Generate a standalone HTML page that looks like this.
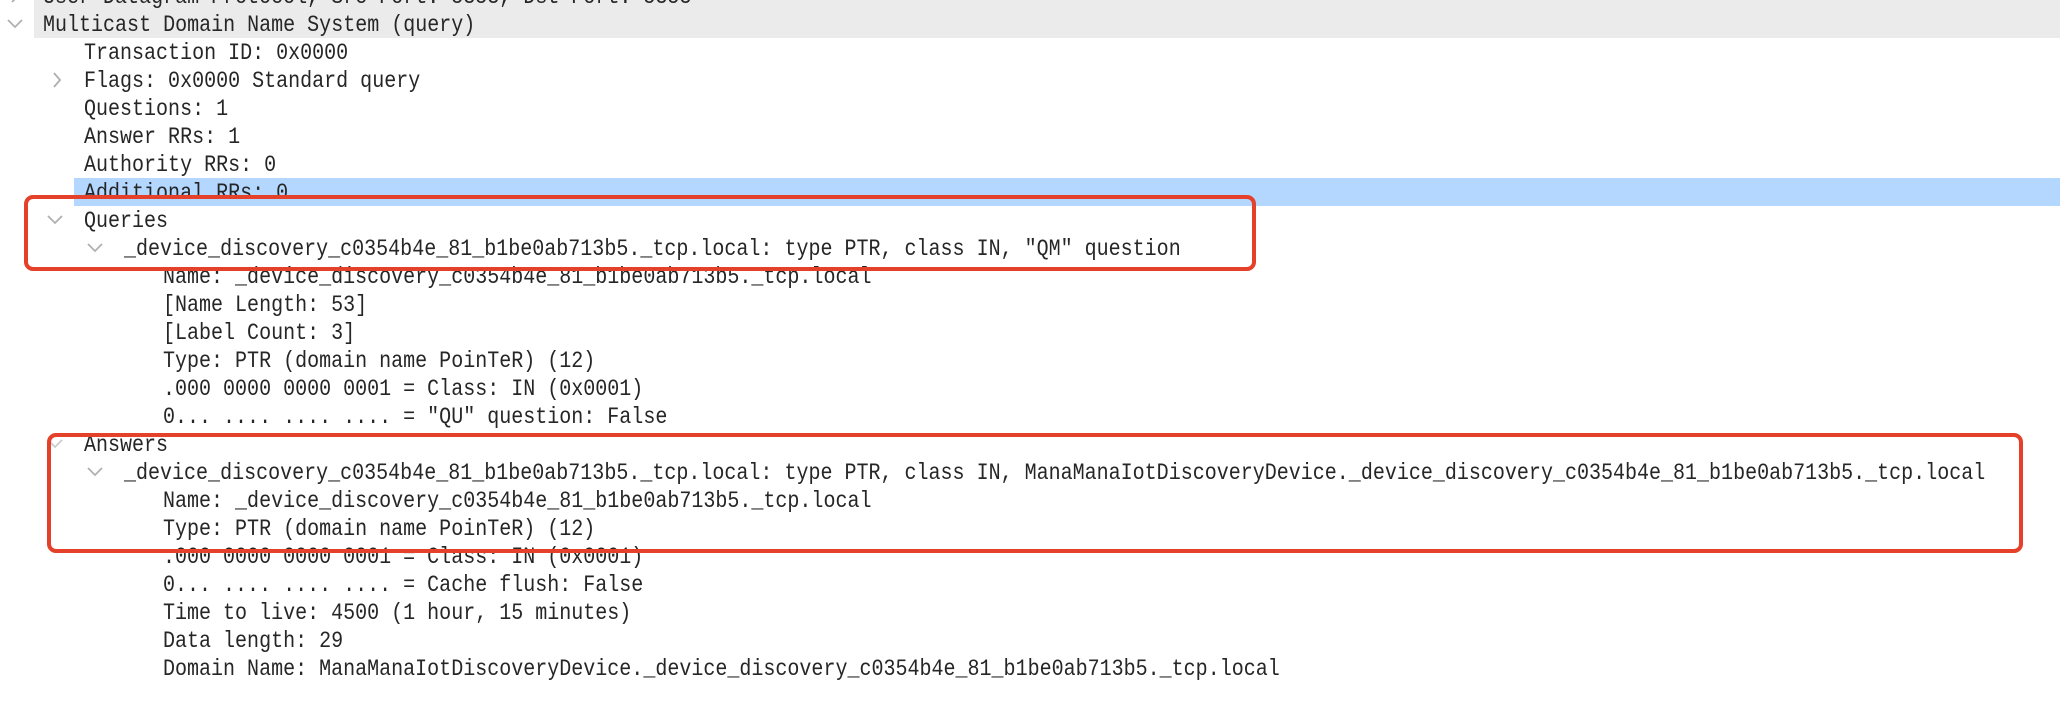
<!DOCTYPE html>
<html><head><meta charset="utf-8"><style>
html,body{margin:0;padding:0;background:#fff;width:2060px;height:724px;overflow:hidden;position:relative}
.r{position:absolute;left:0;right:0;height:28px;line-height:28px;font-family:"Liberation Mono",monospace;font-size:23px;color:#262626;white-space:pre}
.t{position:absolute;top:1px;transform:scaleX(0.87);transform-origin:0 50%}
.c{position:absolute;top:6px}
.box{position:absolute;border:4.5px solid #e5402a;border-radius:9px;box-sizing:border-box}
</style></head><body>
<div style="position:absolute;left:34px;top:0;width:2026px;height:38px;background:#ebebeb"></div>
<div style="position:absolute;left:74px;top:178px;width:1986px;height:28px;background:#b3d7ff"></div>

<div class="r" style="top:-18px"><svg class="c" style="left:8px" width="14" height="16"><path d="M4 2 L10 8 L4 14" fill="none" stroke="#b0b0b0" stroke-width="1.8"/></svg><span class="t" style="left:43px">User Datagram Protocol, Src Port: 5353, Dst Port: 5353</span></div>
<div class="r" style="top:10px"><svg class="c" style="left:6px" width="18" height="16"><path d="M2 4 L9 11 L16 4" fill="none" stroke="#b0b0b0" stroke-width="1.8"/></svg><span class="t" style="left:43px">Multicast Domain Name System (query)</span></div>
<div class="r" style="top:38px"><span class="t" style="left:84px">Transaction ID: 0x0000</span></div>
<div class="r" style="top:66px"><svg class="c" style="left:50px" width="14" height="16"><path d="M4 1 L10 8 L4 15" fill="none" stroke="#b0b0b0" stroke-width="1.8"/></svg><span class="t" style="left:84px">Flags: 0x0000 Standard query</span></div>
<div class="r" style="top:94px"><span class="t" style="left:84px">Questions: 1</span></div>
<div class="r" style="top:122px"><span class="t" style="left:84px">Answer RRs: 1</span></div>
<div class="r" style="top:150px"><span class="t" style="left:84px">Authority RRs: 0</span></div>
<div class="r" style="top:178px"><span class="t" style="left:84px">Additional RRs: 0</span></div>
<div class="r" style="top:206px"><svg class="c" style="left:46px" width="18" height="16"><path d="M2 4 L9 11 L16 4" fill="none" stroke="#b0b0b0" stroke-width="1.8"/></svg><span class="t" style="left:84px">Queries</span></div>
<div class="r" style="top:234px"><svg class="c" style="left:86px" width="18" height="16"><path d="M2 4 L9 11 L16 4" fill="none" stroke="#b0b0b0" stroke-width="1.8"/></svg><span class="t" style="left:124px">_device_discovery_c0354b4e_81_b1be0ab713b5._tcp.local: type PTR, class IN, "QM" question</span></div>
<div class="r" style="top:262px"><span class="t" style="left:163px">Name: _device_discovery_c0354b4e_81_b1be0ab713b5._tcp.local</span></div>
<div class="r" style="top:290px"><span class="t" style="left:163px">[Name Length: 53]</span></div>
<div class="r" style="top:318px"><span class="t" style="left:163px">[Label Count: 3]</span></div>
<div class="r" style="top:346px"><span class="t" style="left:163px">Type: PTR (domain name PoinTeR) (12)</span></div>
<div class="r" style="top:374px"><span class="t" style="left:163px">.000 0000 0000 0001 = Class: IN (0x0001)</span></div>
<div class="r" style="top:402px"><span class="t" style="left:163px">0... .... .... .... = "QU" question: False</span></div>
<div class="r" style="top:430px"><svg class="c" style="left:46px" width="18" height="16"><path d="M2 4 L9 11 L16 4" fill="none" stroke="#ccc" stroke-width="1.8"/></svg><span class="t" style="left:84px">Answers</span></div>
<div class="r" style="top:458px"><svg class="c" style="left:86px" width="18" height="16"><path d="M2 4 L9 11 L16 4" fill="none" stroke="#b0b0b0" stroke-width="1.8"/></svg><span class="t" style="left:124px">_device_discovery_c0354b4e_81_b1be0ab713b5._tcp.local: type PTR, class IN, ManaManaIotDiscoveryDevice._device_discovery_c0354b4e_81_b1be0ab713b5._tcp.local</span></div>
<div class="r" style="top:486px"><span class="t" style="left:163px">Name: _device_discovery_c0354b4e_81_b1be0ab713b5._tcp.local</span></div>
<div class="r" style="top:514px"><span class="t" style="left:163px">Type: PTR (domain name PoinTeR) (12)</span></div>
<div class="r" style="top:542px"><span class="t" style="left:163px">.000 0000 0000 0001 = Class: IN (0x0001)</span></div>
<div class="r" style="top:570px"><span class="t" style="left:163px">0... .... .... .... = Cache flush: False</span></div>
<div class="r" style="top:598px"><span class="t" style="left:163px">Time to live: 4500 (1 hour, 15 minutes)</span></div>
<div class="r" style="top:626px"><span class="t" style="left:163px">Data length: 29</span></div>
<div class="r" style="top:654px"><span class="t" style="left:163px">Domain Name: ManaManaIotDiscoveryDevice._device_discovery_c0354b4e_81_b1be0ab713b5._tcp.local</span></div>

<div class="box" style="left:24px;top:195px;width:1232px;height:76px"></div>
<div class="box" style="left:47px;top:433px;width:1976px;height:120px"></div>
</body></html>
